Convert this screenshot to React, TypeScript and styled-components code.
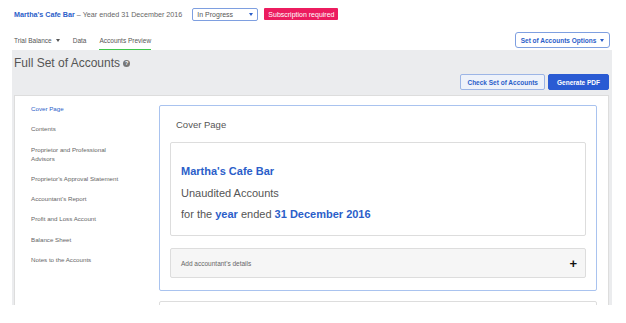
import * as React from 'react'
import styled, {createGlobalStyle} from 'styled-components'

const GlobalStyle = createGlobalStyle`
  html, body {
    margin: 0;
    padding: 0;
    background: #fff;
    font-family: "Liberation Sans", Arial, sans-serif;
    color: #555;
  }
  * { box-sizing: border-box; }
`

const blue = '#2b5ec9'

const Page = styled.div`
  width: 626px;
  height: 323px;
  overflow: hidden;
  background: #fff;
`

const TopBar = styled.div`
  display: flex;
  align-items: center;
  height: 28px;
  padding: 0 14px;
`

const Title = styled.div`
  font-size: 7.2px;
  color: #666;
  b {
    color: ${blue};
    font-weight: bold;
  }
`

const StatusSelect = styled.div`
  margin-left: 10px;
  width: 66px;
  height: 13px;
  border: 1px solid #7e9fe0;
  border-radius: 2px;
  display: flex;
  align-items: center;
  justify-content: space-between;
  padding: 0 4px;
  font-size: 7px;
  color: #555;
`

const Caret = styled.span<{color?: string}>`
  display: inline-block;
  width: 0;
  height: 0;
  border-left: 2.5px solid transparent;
  border-right: 2.5px solid transparent;
  border-top: 3px solid ${p => p.color || '#555'};
  margin-left: 4px;
`

const Badge = styled.div`
  margin-left: 6px;
  height: 12px;
  padding: 0 4px;
  background: #ec1c5f;
  color: #fff;
  font-size: 7px;
  border-radius: 1px;
  display: flex;
  align-items: center;
`

const TabRow = styled.div`
  display: flex;
  align-items: flex-end;
  justify-content: space-between;
  height: 22px;
  padding: 0 16px 0 14px;
`

const Tabs = styled.div`
  display: flex;
  gap: 13px;
`

const Tab = styled.div<{active?: boolean}>`
  font-size: 6.5px;
  color: #555;
  padding-bottom: 5px;
  border-bottom: 1px solid ${p => (p.active ? '#3ec84a' : 'transparent')};
  display: flex;
  align-items: center;
`

const OptionsButton = styled.div`
  height: 16px;
  width: 95px;
  margin-bottom: 2px;
  border: 1px solid #7e9fe0;
  border-radius: 3px;
  display: flex;
  align-items: center;
  justify-content: center;
  font-size: 6.5px;
  font-weight: bold;
  color: ${blue};
`

const GrayArea = styled.div`
  margin: 0 14px 0 12px;
  background: #ebecee;
  height: 255px;
  display: flex;
  flex-direction: column;
  padding: 0 3px 0 2px;
`

const HeaderRow = styled.div`
  height: 45px;
  display: flex;
  flex-direction: column;
  padding: 6px 0 0 0;
`

const PageTitle = styled.h1`
  margin: 0;
  font-size: 12px;
  font-weight: normal;
  color: #555;
  display: flex;
  align-items: center;
`

const HelpIcon = styled.span`
  width: 7px;
  height: 7px;
  border-radius: 50%;
  background: #777;
  color: #fff;
  font-size: 5.5px;
  font-weight: bold;
  display: inline-flex;
  align-items: center;
  justify-content: center;
  margin-left: 3px;
`

const Actions = styled.div`
  display: flex;
  justify-content: flex-end;
  gap: 3px;
  margin-top: 4px;
`

const Button = styled.div<{primary?: boolean}>`
  height: 16px;
  padding: 0 ${p => (p.primary ? 8 : 6)}px;
  border-radius: 2px;
  display: flex;
  align-items: center;
  font-size: 6.5px;
  font-weight: bold;
  background: ${p => (p.primary ? '#2a5bd3' : '#eef2fa')};
  color: ${p => (p.primary ? '#fff' : blue)};
  border: 1px solid ${p => (p.primary ? '#2a5bd3' : '#9cb5e6')};
`

const Panel = styled.div`
  flex: 1;
  background: #fff;
  border: 1px solid #ddd;
  border-bottom: none;
  display: flex;
  overflow: hidden;
`

const Sidebar = styled.nav`
  width: 144px;
  padding: 8px 0 0 16px;
  display: flex;
  flex-direction: column;
`

const NavItem = styled.div<{active?: boolean}>`
  font-size: 6.2px;
  line-height: 9px;
  color: ${p => (p.active ? blue : '#666')};
  margin-bottom: 11.3px;
  max-width: 100px;
`

const Content = styled.div`
  flex: 1;
  padding: 9px 11px 0 0;
  display: flex;
  flex-direction: column;
  gap: 10px;
`

const Card = styled.div<{plain?: boolean}>`
  border: 1px solid ${p => (p.plain ? '#ddd' : '#a9c3ef')};
  border-radius: 2px;
  padding: 0 10px 12px 10px;
  flex-shrink: 0;
  min-height: 20px;
`

const CardTitle = styled.div`
  font-size: 9.5px;
  color: #555;
  padding: 13px 0 0 6px;
  height: 36px;
`

const CoverBox = styled.div`
  border: 1px solid #ddd;
  border-radius: 2px;
  height: 94px;
  padding: 22px 0 0 10px;
`

const CoverLine = styled.div<{strong?: boolean}>`
  font-size: 11px;
  height: 21.5px;
  color: ${p => (p.strong ? blue : '#555')};
  font-weight: ${p => (p.strong ? 'bold' : 'normal')};
  b {
    color: ${blue};
  }
`

const Accordion = styled.div`
  margin-top: 12px;
  height: 30px;
  border: 1px solid #ddd;
  border-radius: 2px;
  background: #f6f6f6;
  display: flex;
  align-items: center;
  justify-content: space-between;
  padding: 0 8px 0 10px;
  font-size: 6.5px;
  color: #666;
`

const Plus = styled.span`
  font-size: 13px;
  font-weight: bold;
  color: #111;
`

const navItems = [
  'Cover Page',
  'Contents',
  'Proprietor and Professional Advisors',
  "Proprietor's Approval Statement",
  "Accountant's Report",
  'Profit and Loss Account',
  'Balance Sheet',
  'Notes to the Accounts',
]

export default function App() {
  return (
    <Page>
      <GlobalStyle />
      <TopBar>
        <Title>
          <b>Martha's Cafe Bar</b> – Year ended 31 December 2016
        </Title>
        <StatusSelect>
          In Progress <Caret color={blue} />
        </StatusSelect>
        <Badge>Subscription required</Badge>
      </TopBar>
      <TabRow>
        <Tabs>
          <Tab>
            Trial Balance <Caret />
          </Tab>
          <Tab>Data</Tab>
          <Tab active>Accounts Preview</Tab>
        </Tabs>
        <OptionsButton>
          Set of Accounts Options <Caret color={blue} />
        </OptionsButton>
      </TabRow>
      <GrayArea>
        <HeaderRow>
          <PageTitle>
            Full Set of Accounts <HelpIcon>?</HelpIcon>
          </PageTitle>
          <Actions>
            <Button>Check Set of Accounts</Button>
            <Button primary>Generate PDF</Button>
          </Actions>
        </HeaderRow>
        <Panel>
          <Sidebar>
            {navItems.map((item, i) => (
              <NavItem key={item} active={i === 0}>
                {item}
              </NavItem>
            ))}
          </Sidebar>
          <Content>
            <Card>
              <CardTitle>Cover Page</CardTitle>
              <CoverBox>
                <CoverLine strong>Martha's Cafe Bar</CoverLine>
                <CoverLine>Unaudited Accounts</CoverLine>
                <CoverLine>
                  for the <b>year</b> ended <b>31 December 2016</b>
                </CoverLine>
              </CoverBox>
              <Accordion>
                Add accountant's details
                <Plus>+</Plus>
              </Accordion>
            </Card>
            <Card plain />
          </Content>
        </Panel>
      </GrayArea>
    </Page>
  )
}
